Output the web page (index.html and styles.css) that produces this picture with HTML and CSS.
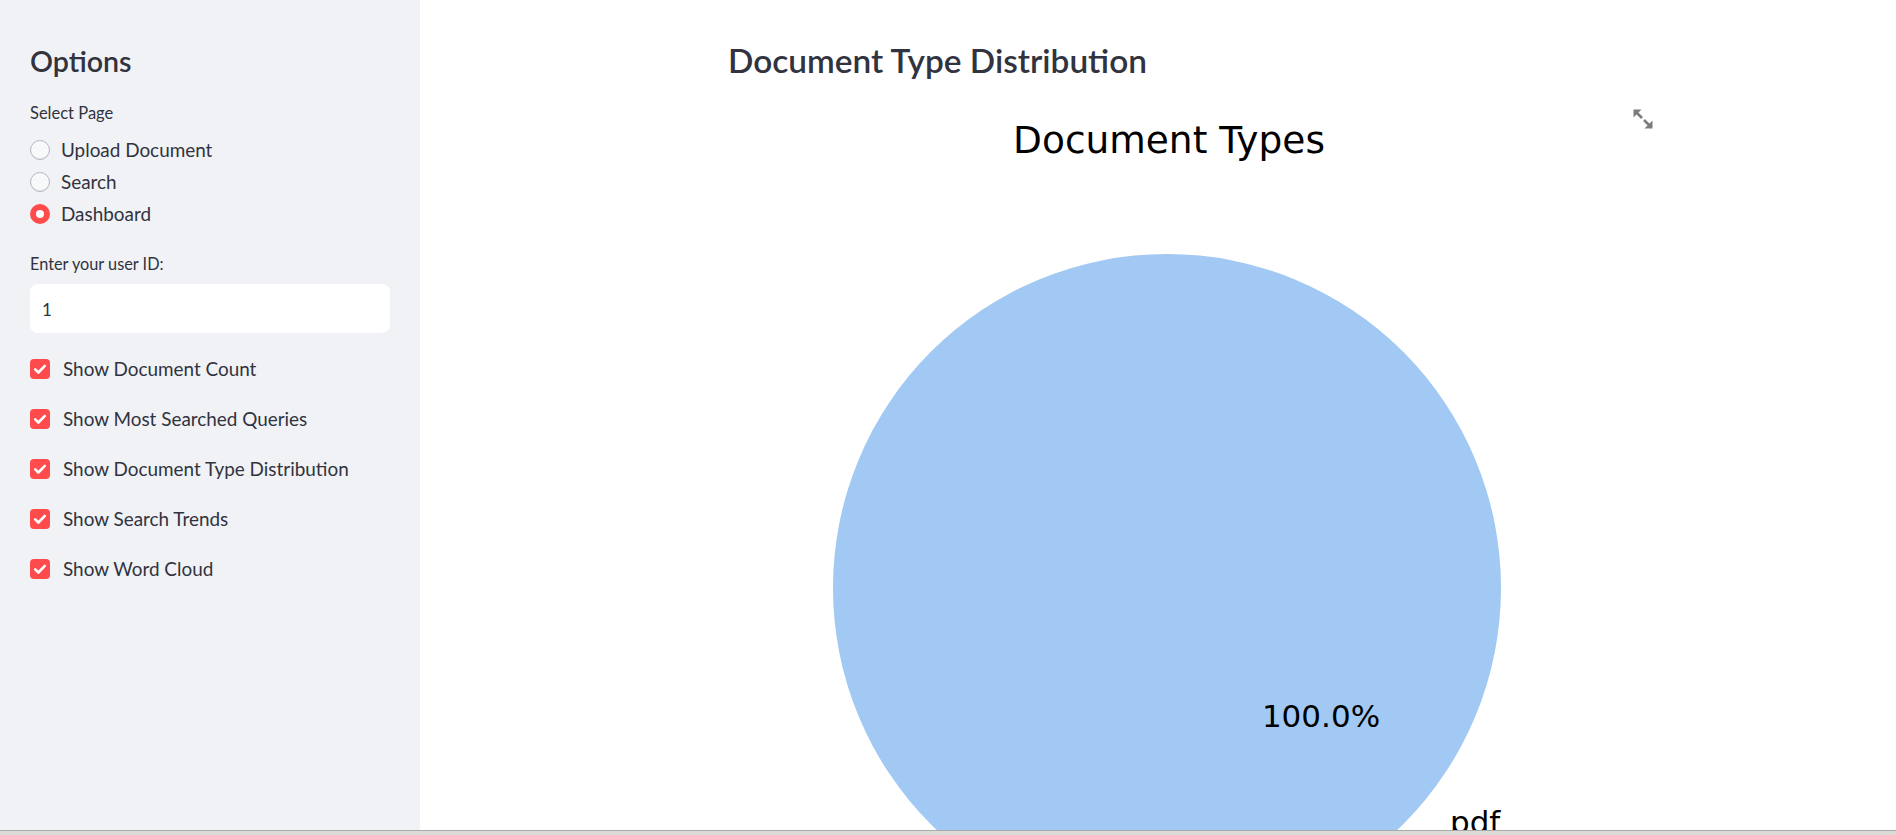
FILE: index.html
```html
<!DOCTYPE html>
<html lang="en">
<head>
<meta charset="utf-8">
<title>Dashboard</title>
<link rel="stylesheet" href="styles.css">
</head>
<body>
<div class="app">
  <aside class="sidebar">
    <h2 class="side-title">Options</h2>
    <div class="label">Select Page</div>
    <div class="radio-group">
      <div class="radio-row"><span class="radio"></span><span class="opt">Upload Document</span></div>
      <div class="radio-row"><span class="radio"></span><span class="opt">Search</span></div>
      <div class="radio-row"><span class="radio checked"></span><span class="opt">Dashboard</span></div>
    </div>
    <div class="label label-input">Enter your user ID:</div>
    <div class="input">1</div>
    <div class="checks">
      <div class="check-row"><span class="box"><svg viewBox="0 0 20 20" width="20" height="20"><path d="M5.2 10.3l3.2 3.2 6.4-6.6" fill="none" stroke="#fff" stroke-width="2.6" stroke-linecap="round" stroke-linejoin="round"/></svg></span><span class="opt">Show Document Count</span></div>
      <div class="check-row"><span class="box"><svg viewBox="0 0 20 20" width="20" height="20"><path d="M5.2 10.3l3.2 3.2 6.4-6.6" fill="none" stroke="#fff" stroke-width="2.6" stroke-linecap="round" stroke-linejoin="round"/></svg></span><span class="opt">Show Most Searched Queries</span></div>
      <div class="check-row"><span class="box"><svg viewBox="0 0 20 20" width="20" height="20"><path d="M5.2 10.3l3.2 3.2 6.4-6.6" fill="none" stroke="#fff" stroke-width="2.6" stroke-linecap="round" stroke-linejoin="round"/></svg></span><span class="opt">Show Document Type Distribution</span></div>
      <div class="check-row"><span class="box"><svg viewBox="0 0 20 20" width="20" height="20"><path d="M5.2 10.3l3.2 3.2 6.4-6.6" fill="none" stroke="#fff" stroke-width="2.6" stroke-linecap="round" stroke-linejoin="round"/></svg></span><span class="opt">Show Search Trends</span></div>
      <div class="check-row"><span class="box"><svg viewBox="0 0 20 20" width="20" height="20"><path d="M5.2 10.3l3.2 3.2 6.4-6.6" fill="none" stroke="#fff" stroke-width="2.6" stroke-linecap="round" stroke-linejoin="round"/></svg></span><span class="opt">Show Word Cloud</span></div>
    </div>
  </aside>
  <main class="main">
    <div class="block">
      <h3 class="page-title">Document Type Distribution</h3>
      <div class="chart">
        <svg class="chart-svg" width="860" height="740" viewBox="0 0 860 740">
          <text class="chart-title" x="441" y="63" text-anchor="middle">Document Types</text>
          <circle cx="439" cy="498" r="334" fill="#a1c9f4"/>
          <text class="chart-label" x="593" y="637" text-anchor="middle">100.0%</text>
          <text class="chart-label" x="722" y="743">pdf</text>
        </svg>
        <button class="expand" aria-label="View fullscreen">
          <svg viewBox="0 0 20 20" width="20" height="20">
            <path d="M0.5 0.5h8l-8 8z" fill="#7c7c80"/>
            <path d="M3 3l6 6" stroke="#7c7c80" stroke-width="2.6"/>
            <path d="M19.5 19.5h-8l8-8z" fill="#7c7c80"/>
            <path d="M17 17l-6-6" stroke="#7c7c80" stroke-width="2.6"/>
          </svg>
        </button>
      </div>
    </div>
  </main>
</div>
<div class="taskbar"></div>
</body>
</html>
```

FILE: styles.css
```css
html, body {
  margin: 0;
  padding: 0;
  height: 835px;
  overflow: hidden;
}
body {
  display: flex;
  flex-direction: column;
  font-family: "Lato", "Open Sans", sans-serif;
  color: #31333f;
  background: #ffffff;
}
.app {
  flex: 1;
  display: flex;
  min-height: 0;
  overflow: hidden;
}
.sidebar {
  width: 420px;
  flex: none;
  box-sizing: border-box;
  background: #f0f2f6;
  padding: 43px 30px 0 30px;
  display: flex;
  flex-direction: column;
}
.side-title {
  margin: 0;
  font-size: 28.6px;
  line-height: 36px;
  font-weight: 600;
  padding-left: 0;
}
.label {
  margin-top: 23px;
  font-size: 16.5px;
  line-height: 22px;
  padding-left: 0;
}
.radio-group {
  margin-top: 10px;
  display: flex;
  flex-direction: column;
}
.radio-row {
  height: 32px;
  display: flex;
  align-items: center;
  gap: 11px;
}
.opt {
  font-size: 18.9px;
  line-height: 24px;
}
.radio {
  width: 20px;
  height: 20px;
  box-sizing: border-box;
  border-radius: 50%;
  border: 1px solid #b3b7c1;
  background: #f8f9fb;
  box-shadow: inset 0 -1px 0 rgba(0,0,0,0.06);
  flex: none;
}
.radio.checked {
  border: 6px solid #ff4b4b;
  background: #ffffff;
  box-shadow: none;
}
.label-input {
  margin-top: 23px;
  font-size: 16.3px;
}
.input {
  margin-top: 9px;
  height: 49px;
  box-sizing: border-box;
  background: #ffffff;
  border-radius: 8px;
  padding-left: 12px;
  display: flex;
  align-items: center;
  font-size: 17px;
  padding-top: 2px;
}
.checks {
  margin-top: 21px;
  display: flex;
  flex-direction: column;
  gap: 20px;
}
.check-row {
  height: 30px;
  display: flex;
  align-items: center;
  gap: 13px;
}
.box {
  width: 20px;
  height: 20px;
  border-radius: 4px;
  background: #ff4b4b;
  flex: none;
  display: flex;
}
.main {
  flex: 1;
  min-width: 0;
  padding-top: 40px;
}
.block {
  width: 860px;
  margin: 0 auto;
}
.page-title {
  margin: 0;
  font-size: 33.4px;
  line-height: 40px;
  font-weight: 600;
}
.chart {
  position: relative;
  margin-top: 10px;
  height: 740px;
}
.chart-svg {
  display: block;
  overflow: hidden;
}
.chart-title {
  font-family: "DejaVu Sans", sans-serif;
  font-size: 37.5px;
  fill: #000000;
}
.chart-label {
  font-family: "DejaVu Sans", sans-serif;
  font-size: 31px;
  fill: #000000;
}
.expand {
  position: absolute;
  left: 905px;
  top: 19px;
  width: 20px;
  height: 20px;
  padding: 0;
  border: 0;
  background: transparent;
  display: flex;
}
.taskbar {
  height: 4px;
  flex: none;
  border-top: 1px solid #a9a9a9;
  background: #dbdbd7;
}
```
